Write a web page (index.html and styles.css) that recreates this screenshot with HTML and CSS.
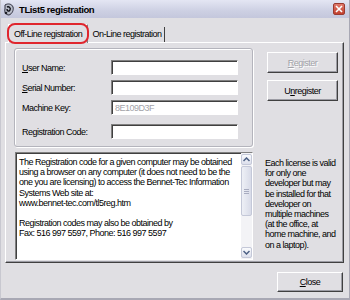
FILE: index.html
```html
<!DOCTYPE html>
<html lang="en">
<head>
    <meta charset="UTF-8">
    <title>TList5 registration</title>
    <link rel="stylesheet" href="styles.css">
</head>
<body>
    <div class="window">
        <div class="titlebar">
            <svg class="app-icon" width="12" height="13" viewBox="0 0 12 13">
                <path d="M2 2 C5 0 9 1 10 4 C11 7 9 11 6 12 C3 12 1 9 2 6 Z" fill="#b8bcc8" stroke="#303040" stroke-width="1"/>
                <path d="M4 4 C6 3 8 5 7 7 C6 9 4 8 4 6" fill="none" stroke="#101018" stroke-width="1.4"/>
                <circle cx="3" cy="10" r="1.3" fill="#202028"/>
            </svg>
            <span class="title">TList5 registration</span>
            <div class="close-x">
                <svg width="8" height="8" viewBox="0 0 8 8"><path d="M1 1 L7 7 M7 1 L1 7" stroke="#fff" stroke-width="1.6"/></svg>
            </div>
        </div>

        <div class="body">
            <div class="tabs">
                <div class="tab active">Off-Line registration</div>
                <div class="tab">On-Line registration</div>
            </div>

            <div class="panel">
                <div class="left-col">
                    <div class="group">
                        <div class="field">
                            <label><u>U</u>ser Name:</label>
                            <div class="input"></div>
                        </div>
                        <div class="field">
                            <label><u>S</u>erial Number:</label>
                            <div class="input"></div>
                        </div>
                        <div class="field">
                            <label>Machine Key:</label>
                            <div class="input disabled">8E109D3F</div>
                        </div>
                        <div class="field last">
                            <label>Registration Code:</label>
                            <div class="input"></div>
                        </div>
                    </div>

                    <div class="memo">
                        <div class="memo-text">The Registration code for a given computer may be obtained<br>using a browser on any computer (it does not need to be the<br>one you are licensing) to access the Bennet-Tec Information<br>Systems Web site at:<br>www.bennet-tec.com/tl5reg.htm<br><br>Registration codes may also be obtained by<br>Fax: 516 997 5597, Phone: 516 997 5597</div>
                        <div class="scrollbar">
                            <div class="sb-btn">
                                <svg width="7" height="5" viewBox="0 0 7 5"><path d="M0.5 4 L3.5 1 L6.5 4" fill="none" stroke="#4d6185" stroke-width="1.5"/></svg>
                            </div>
                            <div class="sb-thumb"><span></span><span></span><span></span></div>
                            <div class="sb-track"></div>
                            <div class="sb-btn">
                                <svg width="7" height="5" viewBox="0 0 7 5"><path d="M0.5 1 L3.5 4 L6.5 1" fill="none" stroke="#4d6185" stroke-width="1.5"/></svg>
                            </div>
                        </div>
                    </div>
                </div>

                <div class="right-col">
                    <div class="button disabled"><u>R</u>egister</div>
                    <div class="button">U<u>n</u>register</div>
                    <div class="note">Each license is valid<br>for only one<br>developer but may<br>be installed for that<br>developer on<br>multiple machines<br>(at the office, at<br>home machine, and<br>on a laptop).</div>
                </div>
            </div>

            <div class="footer">
                <div class="button close"><u>C</u>lose</div>
            </div>
        </div>

        <div class="highlight"></div>
    </div>
</body>
</html>
```

FILE: styles.css
```css
* {
    margin: 0;
    padding: 0;
    box-sizing: border-box;
}

body {
    width: 350px;
    height: 300px;
    overflow: hidden;
    background: #e0dfe3;
    font-family: "Liberation Sans", Arial, sans-serif;
    font-size: 9px;
    letter-spacing: -0.5px;
    color: #000;
}

.window {
    position: relative;
    width: 350px;
    height: 300px;
    background: #e0dfe3;
    border-left: 1px solid #c8c8d0;
    border-right: 1px solid #a8a8b4;
    border-bottom: 2px solid #a8a8b4;
}

.titlebar {
    height: 18px;
    display: flex;
    align-items: center;
    padding: 0 4px 0 2px;
    background: linear-gradient(#e4e6f3, #cdd0e3 60%, #c4c7dc);
}

.app-icon {
    flex: none;
    margin-right: 4px;
}

.title {
    font-weight: bold;
    font-size: 9.5px;
    letter-spacing: -0.4px;
    flex: 1;
}

.close-x {
    width: 12px;
    height: 12px;
    border-radius: 2px;
    background: linear-gradient(#e07a6c, #c2402e);
    border: 1px solid #9a3a30;
    display: flex;
    align-items: center;
    justify-content: center;
}

.body {
    padding: 6px 5px 0 4px;
}

.tabs {
    display: flex;
    align-items: flex-end;
    height: 18px;
    padding-left: 3px;
}

.tab {
    height: 15px;
    padding: 0 3px 0 4px;
    line-height: 14px;
    border-right: 1px solid #404040;
}

.tab.active {
    height: 19px;
    margin-bottom: -1px;
    line-height: 18px;
    padding: 0 5px 0 5px;
    background: #e0dfe3;
    border-top: 1px solid #fff;
    border-left: 1px solid #fff;
    border-right: 1px solid #808080;
    position: relative;
    z-index: 1;
}

.panel {
    height: 221px;
    display: flex;
    gap: 14px;
    padding: 5px 5px 2px 8px;
    border-top: 1px solid #fff;
    border-left: 1px solid #fff;
    border-right: 1px solid #404040;
    border-bottom: 1px solid #404040;
    box-shadow: inset -1px -1px 0 #9c9ca4;
}

.left-col {
    width: 239px;
    display: flex;
    flex-direction: column;
    gap: 5px;
}

.group {
    height: 99px;
    padding: 11px 14px 7px 7px;
    border: 1px solid #b4b4bc;
    border-radius: 3px;
    box-shadow: inset 1px 1px 0 #fff, 1px 1px 0 #fff;
    display: flex;
    flex-direction: column;
    gap: 5px;
}

.field {
    display: flex;
    align-items: center;
    height: 15px;
}

.field.last {
    margin-top: 4px;
}

.field label {
    width: 89px;
}

.input {
    width: 127px;
    height: 15px;
    background: #fff;
    border-top: 1px solid #808080;
    border-left: 1px solid #808080;
    border-right: 1px solid #fff;
    border-bottom: 1px solid #fff;
    box-shadow: inset 1px 1px 0 #404040;
    padding: 1px 3px;
    line-height: 12px;
}

.input.disabled {
    color: #a2a2a8;
}

.memo {
    height: 108px;
    margin-left: 1px;
    display: flex;
    background: #fff;
    border-top: 1px solid #808080;
    border-left: 1px solid #808080;
    border-right: 1px solid #fff;
    border-bottom: 1px solid #fff;
    box-shadow: inset 1px 1px 0 #404040;
}

.memo-text {
    flex: 1;
    padding: 4px 0 0 3px;
    line-height: 10.2px;
    white-space: nowrap;
    overflow: hidden;
}

.scrollbar {
    width: 11px;
    display: flex;
    flex-direction: column;
    padding: 1px 0;
    background: #f3f3f6;
}

.sb-btn {
    height: 11px;
    border: 1px solid #c4c8d8;
    border-radius: 2px;
    background: linear-gradient(#fafbfd, #dcdfec);
    display: flex;
    align-items: center;
    justify-content: center;
}

.sb-thumb {
    height: 50px;
    margin-top: 1px;
    border: 1px solid #c4c8d8;
    border-radius: 2px;
    background: linear-gradient(90deg, #eef0f6, #d8dbe8);
    display: flex;
    flex-direction: column;
    align-items: center;
    justify-content: center;
    gap: 1px;
}

.sb-thumb span {
    width: 5px;
    height: 1px;
    background: #a8acc0;
}

.sb-track {
    flex: 1;
}

.right-col {
    width: 71px;
    padding-top: 4px;
    display: flex;
    flex-direction: column;
    gap: 7px;
}

.button {
    height: 21px;
    display: flex;
    align-items: center;
    justify-content: center;
    background: #e0dfe3;
    border-top: 1px solid #fff;
    border-left: 1px solid #fff;
    border-right: 1px solid #404040;
    border-bottom: 1px solid #404040;
    box-shadow: inset -1px -1px 0 #9c9ca4;
}

.button.disabled {
    color: #a2a2a8;
    text-shadow: 1px 1px 0 #fff;
}

.note {
    margin-top: 50px;
    margin-left: -2px;
    line-height: 10.2px;
    white-space: nowrap;
}

.footer {
    display: flex;
    justify-content: flex-end;
    padding: 9px 1px 0 0;
}

.button.close {
    width: 66px;
    height: 20px;
}

.highlight {
    position: absolute;
    left: 6px;
    top: 23px;
    width: 82px;
    height: 21px;
    border: 2px solid #e0262e;
    border-radius: 8px;
    z-index: 2;
}
```
